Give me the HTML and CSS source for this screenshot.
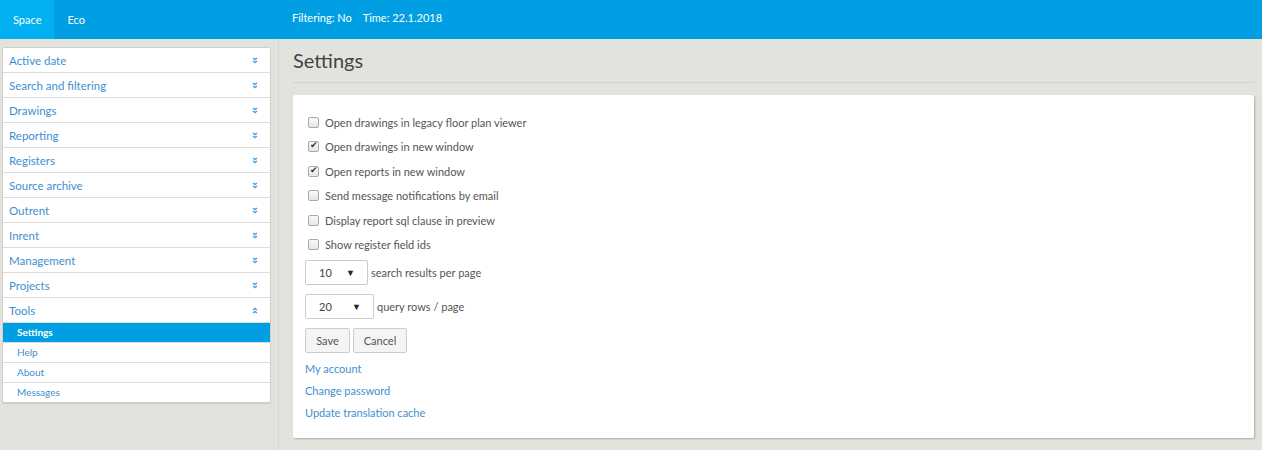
FILE: index.html
```html
<!DOCTYPE html>
<html lang="en">
<head>
    <meta charset="UTF-8">
    <title>Settings</title>
    <link rel="stylesheet" href="styles.css">
</head>
<body>
    <header class="topbar">
        <nav class="tabs">
            <a class="tab active" href="#">Space</a>
            <a class="tab" href="#">Eco</a>
        </nav>
        <div class="status">
            <span>Filtering: No</span>
            <span>Time: 22.1.2018</span>
        </div>
    </header>

    <div class="layout">
        <aside class="sidebar">
            <ul class="menu">
                <li class="menu-item"><span>Active date</span><svg class="chev" viewBox="0 0 6 7"><path d="M1 1l2 1.6L5 1M1 4l2 1.6L5 4"/></svg></li>
                <li class="menu-item"><span>Search and filtering</span><svg class="chev" viewBox="0 0 6 7"><path d="M1 1l2 1.6L5 1M1 4l2 1.6L5 4"/></svg></li>
                <li class="menu-item"><span>Drawings</span><svg class="chev" viewBox="0 0 6 7"><path d="M1 1l2 1.6L5 1M1 4l2 1.6L5 4"/></svg></li>
                <li class="menu-item"><span>Reporting</span><svg class="chev" viewBox="0 0 6 7"><path d="M1 1l2 1.6L5 1M1 4l2 1.6L5 4"/></svg></li>
                <li class="menu-item"><span>Registers</span><svg class="chev" viewBox="0 0 6 7"><path d="M1 1l2 1.6L5 1M1 4l2 1.6L5 4"/></svg></li>
                <li class="menu-item"><span>Source archive</span><svg class="chev" viewBox="0 0 6 7"><path d="M1 1l2 1.6L5 1M1 4l2 1.6L5 4"/></svg></li>
                <li class="menu-item"><span>Outrent</span><svg class="chev" viewBox="0 0 6 7"><path d="M1 1l2 1.6L5 1M1 4l2 1.6L5 4"/></svg></li>
                <li class="menu-item"><span>Inrent</span><svg class="chev" viewBox="0 0 6 7"><path d="M1 1l2 1.6L5 1M1 4l2 1.6L5 4"/></svg></li>
                <li class="menu-item"><span>Management</span><svg class="chev" viewBox="0 0 6 7"><path d="M1 1l2 1.6L5 1M1 4l2 1.6L5 4"/></svg></li>
                <li class="menu-item"><span>Projects</span><svg class="chev" viewBox="0 0 6 7"><path d="M1 1l2 1.6L5 1M1 4l2 1.6L5 4"/></svg></li>
                <li class="menu-item"><span>Tools</span><svg class="chev" viewBox="0 0 6 7"><path d="M1 3l2-1.6L5 3M1 6l2-1.6L5 6"/></svg></li>
                <li class="sub-item selected">Settings</li>
                <li class="sub-item">Help</li>
                <li class="sub-item">About</li>
                <li class="sub-item">Messages</li>
            </ul>
        </aside>

        <main class="content">
            <h1 class="page-title">Settings</h1>
            <div class="panel">
                <label class="check"><input type="checkbox"> Open drawings in legacy floor plan viewer</label>
                <label class="check"><input type="checkbox" checked> Open drawings in new window</label>
                <label class="check"><input type="checkbox" checked> Open reports in new window</label>
                <label class="check"><input type="checkbox"> Send message notifications by email</label>
                <label class="check"><input type="checkbox"> Display report sql clause in preview</label>
                <label class="check"><input type="checkbox"> Show register field ids</label>

                <div class="select-row">
                    <div class="select narrow"><span>10</span><span class="arrow">&#9660;</span></div>
                    <span>search results per page</span>
                </div>
                <div class="select-row">
                    <div class="select"><span>20</span><span class="arrow">&#9660;</span></div>
                    <span>query rows / page</span>
                </div>

                <div class="buttons">
                    <button class="save">Save</button>
                    <button>Cancel</button>
                </div>

                <div class="links">
                    <a href="#">My account</a>
                    <a href="#">Change password</a>
                    <a href="#">Update translation cache</a>
                </div>
            </div>
        </main>
    </div>
</body>
</html>
```

FILE: styles.css
```css
body {
    margin: 0;
    font-family: Lato, "Open Sans", sans-serif;
    background-color: #e3e3de;
    color: #444;
    height: 450px;
    overflow: hidden;
}
.topbar {
    background-color: #009fe3;
    color: #fff;
    height: 39px;
    display: flex;
    font-size: 11px;
}
.tabs {
    display: flex;
    width: 292px;
}
.tab {
    color: #fff;
    text-decoration: none;
    padding: 0 13px;
    line-height: 39px;
}
.tab.active {
    background-color: #00b0f0;
}
.status {
    display: flex;
    gap: 11px;
    line-height: 35px;
}
.layout {
    display: flex;
    height: 411px;
}
.sidebar {
    width: 279px;
    border-right: 1px solid #d6d6d1;
    padding: 8px 0 0 2px;
    box-sizing: border-box;
    flex-shrink: 0;
}
.menu {
    list-style: none;
    margin: 0;
    padding: 0;
    width: 267px;
    background-color: #fff;
    border: 1px solid #d0d0cc;
    border-radius: 2px;
    box-shadow: 0 1px 1px rgba(0, 0, 0, 0.1);
}
.menu-item {
    display: flex;
    justify-content: space-between;
    align-items: center;
    height: 24px;
    padding: 0 12px 0 6px;
    font-size: 11.5px;
    color: #3d8fd1;
    border-bottom: 1px solid #dcdcdc;
}
.chev {
    width: 6px;
    height: 7px;
    fill: none;
    stroke: #43a3e6;
    stroke-width: 1.4;
}
.sub-item {
    height: 19px;
    line-height: 19px;
    padding-left: 14px;
    font-size: 10px;
    color: #3d8fd1;
    border-bottom: 1px solid #dcdcdc;
}
.sub-item:last-child {
    border-bottom: none;
}
.sub-item.selected {
    background-color: #009fe3;
    color: #fff;
    font-weight: bold;
}
.content {
    flex-grow: 1;
    padding: 0 8px 0 14px;
}
.page-title {
    font-size: 20px;
    font-weight: normal;
    color: #444;
    margin: 0;
    padding: 9px 0 10px;
    border-bottom: 1px solid #d3d3ce;
}
.panel {
    background-color: #fff;
    margin-top: 12px;
    padding: 15px 12px 18px;
    border-radius: 2px;
    box-shadow: 1px 1px 2px rgba(0, 0, 0, 0.25);
    font-size: 11px;
    color: #555;
}
.check {
    display: flex;
    align-items: center;
    height: 24.5px;
}
.check input {
    appearance: none;
    width: 11px;
    height: 11px;
    margin: 0 6px 0 3px;
    border: 1px solid #a9a9a9;
    border-radius: 2px;
    background: linear-gradient(#fafafa, #e6e6e6);
    position: relative;
}
.check input:checked::after {
    content: "\2714";
    position: absolute;
    left: 1px;
    top: -2px;
    font-size: 9px;
    color: #333;
}
.select-row {
    display: flex;
    align-items: center;
    margin-top: 3px;
    margin-bottom: 9px;
}
.select-row + .select-row {
    margin-top: 0;
}
.select {
    width: 69px;
    height: 25px;
    border: 1px solid #ccc;
    border-radius: 2px;
    display: flex;
    justify-content: space-between;
    align-items: center;
    padding: 0 12px 0 13px;
    box-sizing: border-box;
    margin-right: 3px;
    color: #444;
}
.select.narrow {
    width: 63px;
}
.arrow {
    font-size: 9px;
    color: #222;
}
.buttons {
    display: flex;
    gap: 3px;
    margin-top: 3px;
}
button {
    font-family: inherit;
    font-size: 11px;
    color: #555;
    background-color: #f4f4f4;
    border: 1px solid #ccc;
    border-radius: 2px;
    height: 25px;
    width: 54px;
}
button.save {
    width: 45px;
}
.links {
    display: flex;
    flex-direction: column;
    gap: 7px;
    margin-top: 8px;
}
.links a {
    color: #3d8fd1;
    text-decoration: none;
    line-height: 15px;
}
```
